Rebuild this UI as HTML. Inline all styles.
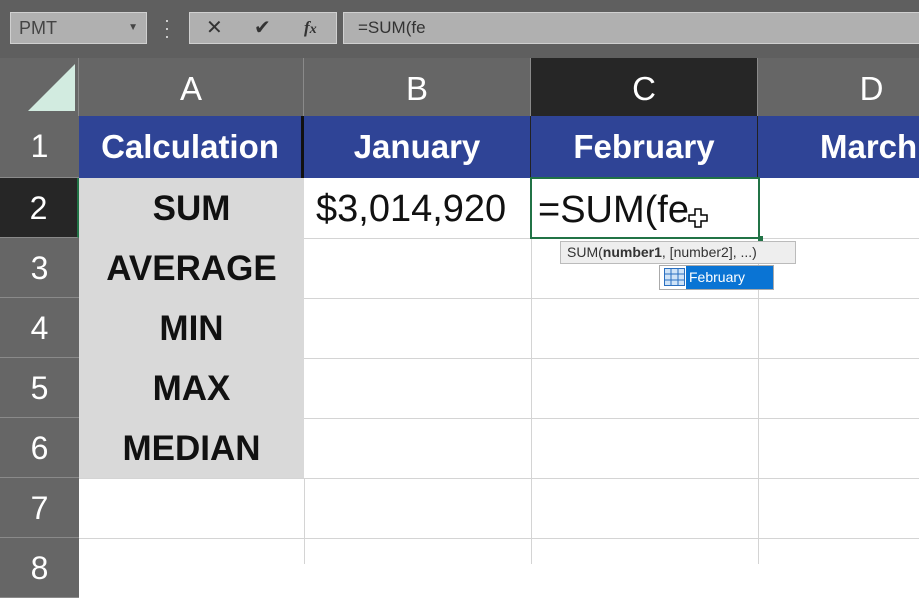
<!DOCTYPE html><html><head><style>
body{margin:0;width:919px;height:564px;overflow:hidden;background:#fff;font-family:"Liberation Sans",sans-serif;position:relative}
div{position:absolute;box-sizing:border-box;white-space:nowrap}
.rh{left:0;width:79px;height:60px;background:#666;color:#fff;font-size:32px;text-align:center;line-height:60px;border-bottom:1px solid #8a8a8a}
.ch{top:58px;height:58px;background:#666;color:#fff;font-size:33px;text-align:center;line-height:62px;border-right:1px solid #8a8a8a}
.a{left:79px;width:225px;height:60px;background:#d9d9d9;font-weight:bold;font-size:35px;text-align:center;line-height:62px;color:#111}
.hl{height:1px;background:#d4d4d4;left:304px;width:615px}
.vl{width:1px;background:#d4d4d4;top:178px;height:386px}
.h1{top:116px;height:62px;background:#2f4496;color:#fff;font-weight:bold;font-size:33px;text-align:center;line-height:62px;overflow:hidden}
</style></head><body>
<div style="left:0;top:0;width:919px;height:58px;background:#5f5f5f"></div>
<div style="left:10px;top:12px;width:137px;height:32px;background:#b0b0b0;border:1px solid #d0d0d0;color:#444;font-size:18px;line-height:30px;padding-left:8px">PMT<span style="position:absolute;right:8px;top:0;font-size:10px">▼</span></div>
<div style="left:164px;top:16px;color:#ddd;font-size:18px;line-height:8px">·<br>·<br>·</div>
<div style="left:189px;top:12px;width:148px;height:32px;background:#b0b0b0;border:1px solid #d0d0d0;color:#333;font-size:20px;line-height:30px"><span style="position:absolute;left:16px">✕</span><span style="position:absolute;left:64px">✔</span><span style="position:absolute;left:114px;font-style:italic;font-family:'Liberation Serif';font-weight:bold;font-size:17px">f<small>x</small></span></div>
<div style="left:343px;top:12px;width:590px;height:32px;background:#b0b0b0;border:1px solid #d0d0d0;color:#333;font-size:17px;line-height:30px;padding-left:14px">=SUM(fe</div>
<div style="left:0;top:58px;width:79px;height:58px;background:#666;border-right:1px solid #8a8a8a"></div>
<svg style="position:absolute;left:28px;top:64px" width="47" height="48"><polygon points="47,0 47,47 0,47" fill="#d2ebe0"/></svg>
<div class="ch" style="left:79px;width:225px">A</div>
<div class="ch" style="left:304px;width:227px">B</div>
<div class="ch" style="left:531px;width:227px;background:#262626">C</div>
<div class="ch" style="left:758px;width:228px">D</div>
<div class="rh" style="top:116px;height:62px">1</div>
<div class="rh" style="top:178px;background:#262626;border-right:2px solid #217346">2</div>
<div class="rh" style="top:238px">3</div>
<div class="rh" style="top:298px">4</div>
<div class="rh" style="top:358px">5</div>
<div class="rh" style="top:418px">6</div>
<div class="rh" style="top:478px">7</div>
<div class="rh" style="top:538px">8</div>
<div class="h1" style="left:79px;width:225px;border-right:3px solid #111">Calculation</div>
<div class="h1" style="left:304px;width:227px;border-right:1px solid #222">January</div>
<div class="h1" style="left:531px;width:227px;border-right:1px solid #222">February</div>
<div class="h1" style="left:758px;width:200px;text-align:left;padding-left:62px">March</div>
<div class="a" style="top:178px">SUM</div>
<div class="a" style="top:238px">AVERAGE</div>
<div class="a" style="top:298px">MIN</div>
<div class="a" style="top:358px">MAX</div>
<div class="a" style="top:418px">MEDIAN</div>
<div class="hl" style="top:238px"></div><div class="hl" style="top:298px"></div><div class="hl" style="top:358px"></div><div class="hl" style="top:418px"></div><div class="hl" style="top:478px;left:79px;width:840px"></div><div class="hl" style="top:538px;left:79px;width:840px"></div>
<div class="vl" style="left:304px;top:478px;height:86px"></div>
<div class="vl" style="left:531px"></div><div class="vl" style="left:758px"></div>
<div style="left:304px;top:178px;width:227px;height:60px;font-size:38px;line-height:62px;padding-left:12px;color:#111">$3,014,920</div>
<div style="left:530px;top:177px;width:230px;height:62px;border:2px solid #217346;font-size:38px;line-height:62px;padding-left:6px;color:#111">=SUM(fe</div>
<svg style="position:absolute;left:688px;top:208px" width="22" height="22"><path d="M7 1h6v6h6v6h-6v6H7v-6H1V7h6z" fill="#fff" stroke="#000" stroke-width="1.5"/></svg>
<div style="left:758px;top:236px;width:5px;height:5px;background:#217346"></div>
<div style="left:560px;top:241px;width:236px;height:23px;background:#eee;border:1px solid #bbb;font-size:14px;line-height:21px;padding-left:6px;color:#333">SUM(<b>number1</b>, [number2], ...)</div>
<div style="left:659px;top:265px;width:115px;height:25px;background:#fff;border:1px solid #aaa"></div>
<svg style="position:absolute;left:664px;top:268px" width="21" height="18"><rect x="0.5" y="0.5" width="20" height="17" fill="#cfe3f7" stroke="#2a6fc0"/><path d="M0 6H21M0 12H21M7 0V18M14 0V18" stroke="#2a6fc0"/></svg>
<div style="left:686px;top:266px;width:87px;height:23px;background:#0a74d4;color:#fff;font-size:14px;line-height:23px;padding-left:3px">February</div>
</body></html>
